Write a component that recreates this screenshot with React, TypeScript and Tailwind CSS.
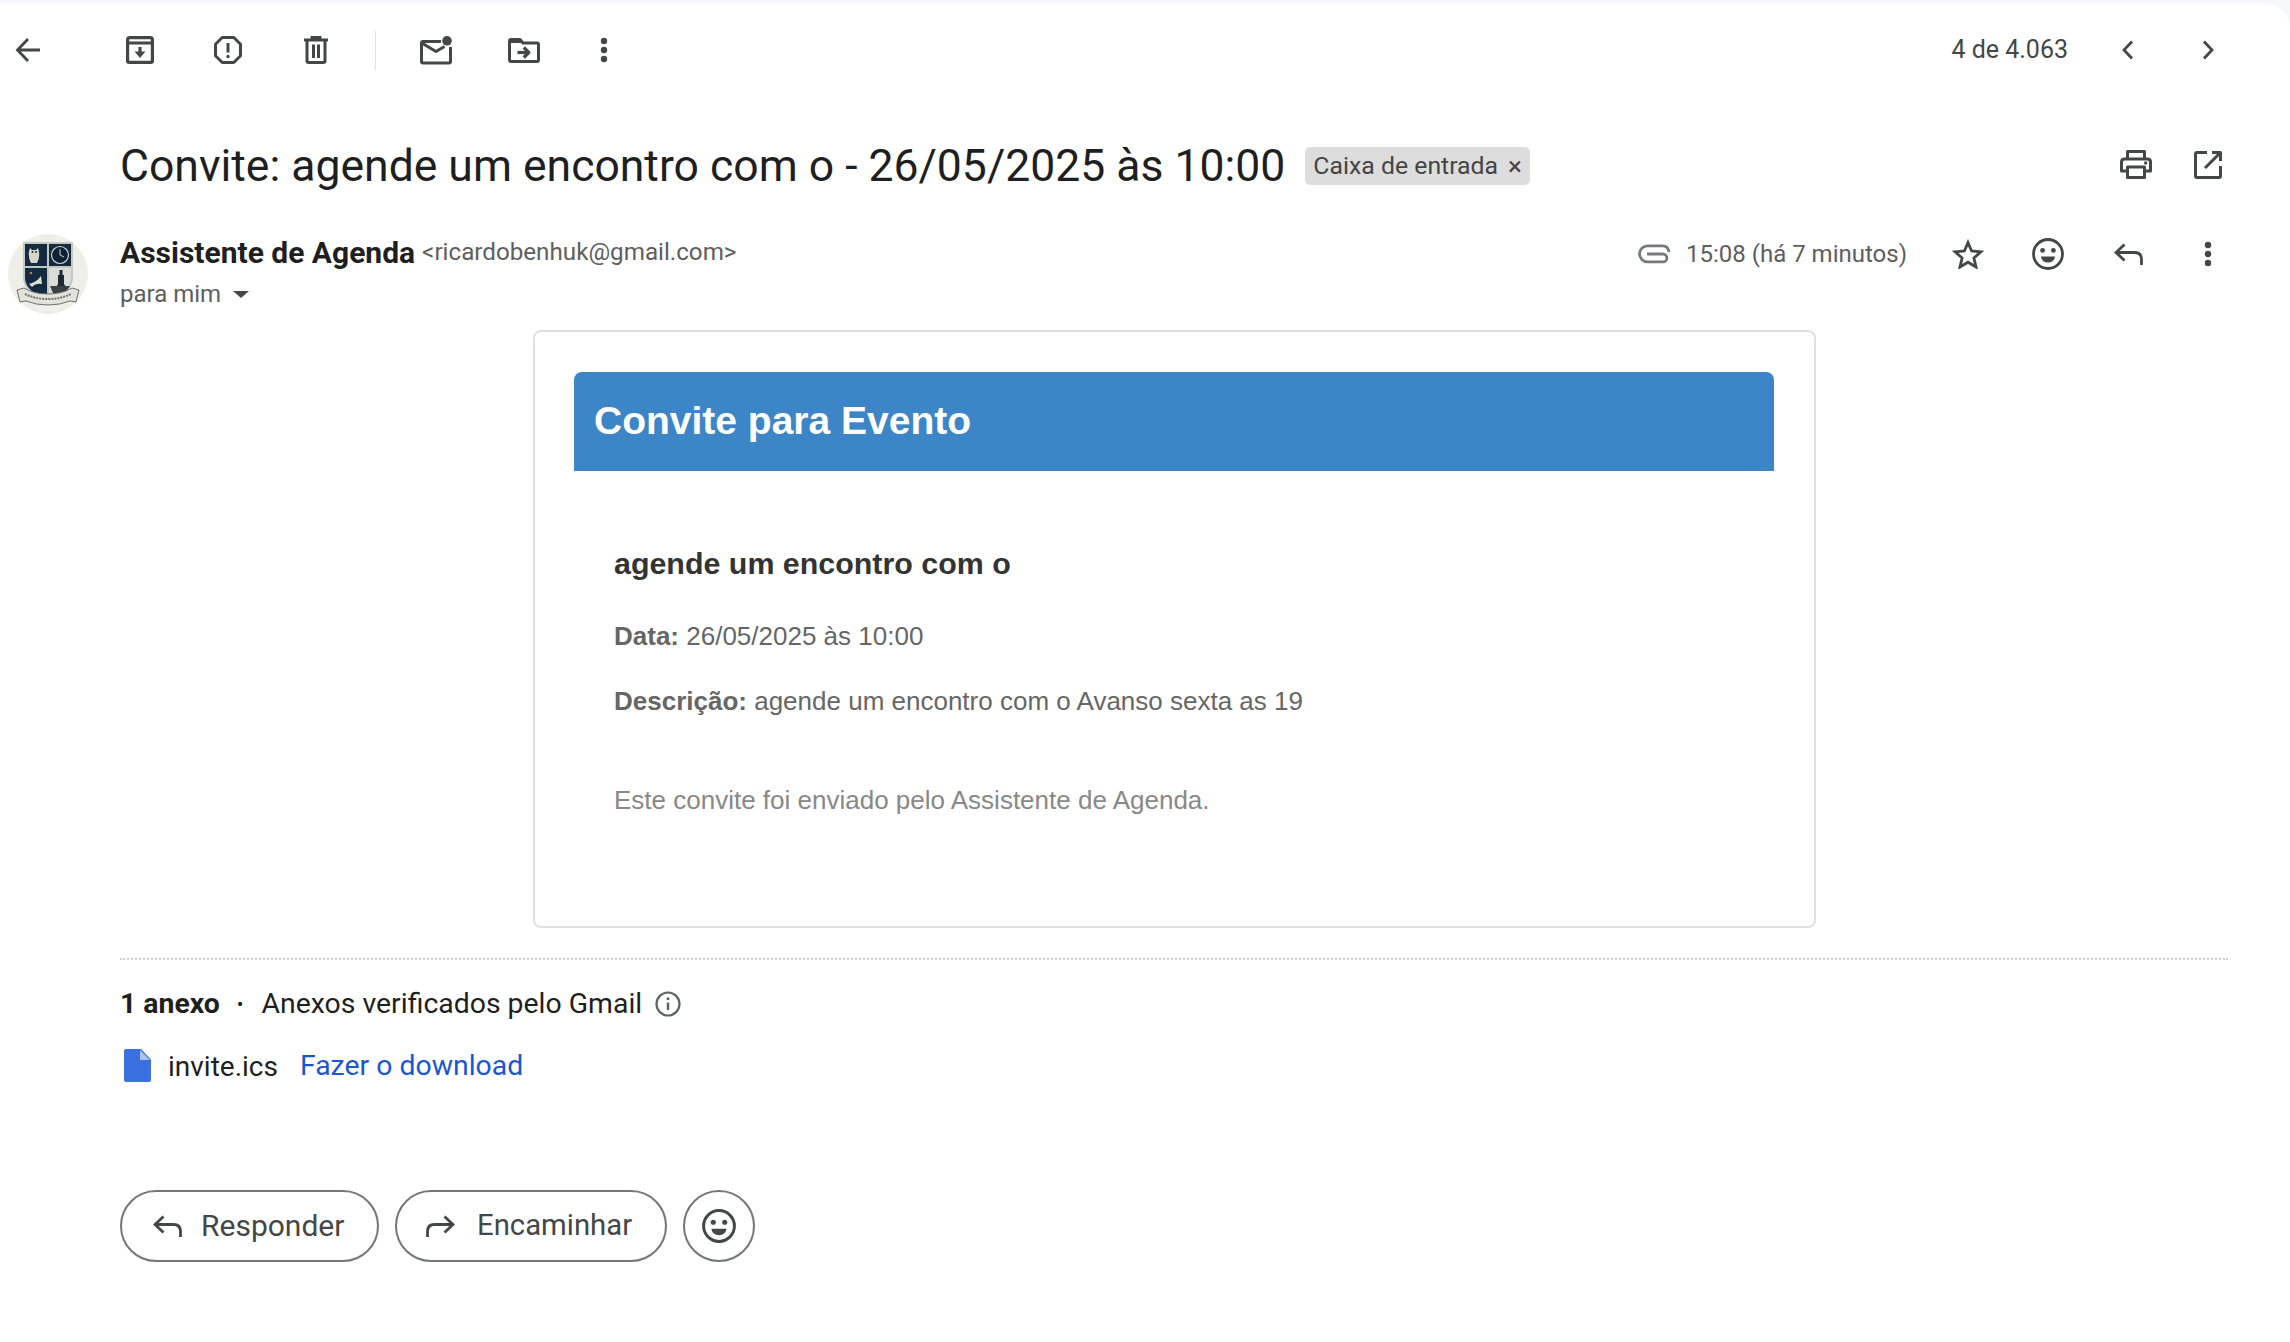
const gsans = "font-['Roboto','Liberation_Sans',sans-serif]";

function IconBox({ w, children }: { w: string; children: React.ReactNode }) {
  return <div className={`flex shrink-0 items-center justify-center ${w}`}>{children}</div>;
}

const ink = "#444746";

function Back() {
  return (
    <svg width="26" height="26" viewBox="0 0 26 26" fill="none" stroke={ink} strokeWidth="2.8">
      <path d="M25 13H3M13 2 2.5 13 13 24" />
    </svg>
  );
}
function Archive() {
  return (
    <svg width="28" height="28" viewBox="0 0 28 28" fill="none" stroke={ink} strokeWidth="3.2" strokeLinejoin="round">
      <path d="M1.6 7V3.8q0-2.2 2.2-2.2h20.4q2.2 0 2.2 2.2V7M1.6 7h24.8v17.7q0 1.7-1.7 1.7H3.3q-1.7 0-1.7-1.7z" />
      <path d="M14 11v7" />
      <path d="M8.5 15.5h11L14 22z" fill={ink} stroke="none" />
    </svg>
  );
}
function Report() {
  return (
    <svg width="28" height="28" viewBox="0 0 28 28" fill="none" stroke={ink} strokeWidth="3" strokeLinejoin="round">
      <path d="M8.2 1.5h11.6l6.7 6.7v11.6l-6.7 6.7H8.2l-6.7-6.7V8.2z" />
      <path d="M14 7v9.5" />
      <circle cx="14" cy="20.5" r="1.7" fill={ink} stroke="none" />
    </svg>
  );
}
function Trash() {
  return (
    <svg width="24" height="28" viewBox="0 0 24 28" fill="none" stroke={ink} strokeWidth="3">
      <path d="M0 4h24M8 4V1.5h8V4M3 4v21q0 1.5 1.5 1.5h15q1.5 0 1.5-1.5V4" />
      <path d="M9.5 8.5v13.5M14.5 8.5v13.5" />
    </svg>
  );
}
function MailDot() {
  return (
    <svg width="32" height="29" viewBox="0 0 32 29" fill="none" stroke={ink} strokeWidth="3" strokeLinejoin="round">
      <path d="M21 5.5H3q-1.5 0-1.5 1.5v18.5q0 1.5 1.5 1.5h26q1.5 0 1.5-1.5V11" />
      <path d="M1.8 7 16 15.5l8.5-5" />
      <circle cx="27" cy="4.8" r="4.8" fill={ink} stroke="none" />
    </svg>
  );
}
function MoveTo() {
  return (
    <svg width="32" height="25" viewBox="0 0 32 25" fill="none" stroke={ink} strokeWidth="3" strokeLinejoin="round">
      <path d="M1.5 3q0-1.5 1.5-1.5h9l3 3.4h14q1.5 0 1.5 1.5V22q0 1.5-1.5 1.5H3q-1.5 0-1.5-1.5z" />
      <path d="M1.5 1.5h10.5l3 3.4H1.5z" fill={ink} stroke="none" />
      <path d="M9.5 14.5h10.5" strokeWidth="3.2" />
      <path d="M15.8 9.5l5 5-5 5" strokeWidth="3.2" />
    </svg>
  );
}
function More() {
  return (
    <svg width="8" height="26" viewBox="0 0 8 26" fill={ink}>
      <circle cx="4" cy="4" r="3.2" />
      <circle cx="4" cy="13" r="3.2" />
      <circle cx="4" cy="22" r="3.2" />
    </svg>
  );
}
function Chevron({ dir }: { dir: "l" | "r" }) {
  return (
    <svg width="14" height="20" viewBox="0 0 14 20" fill="none" stroke={ink} strokeWidth="2.8">
      <path d={dir === "l" ? "M11 1.5 3 10l8 8.5" : "M3 1.5 11 10l-8 8.5"} />
    </svg>
  );
}
function Print() {
  return (
    <svg width="32" height="29" viewBox="0 0 32 29" fill="none" stroke={ink} strokeWidth="3" strokeLinejoin="round">
      <path d="M7.5 9V1.5h17V9" />
      <path d="M7.5 21H1.5v-9q0-3 3-3h23q3 0 3 3v9H24.5" />
      <path d="M7.5 17h17v10.5h-17z" />
      <circle cx="25.7" cy="13" r="1.7" fill={ink} stroke="none" />
    </svg>
  );
}
function OpenNew() {
  return (
    <svg width="28" height="28" viewBox="0 0 28 28" fill="none" stroke={ink} strokeWidth="3" strokeLinejoin="round">
      <path d="M13 1.5H3q-1.5 0-1.5 1.5v22q0 1.5 1.5 1.5h22q1.5 0 1.5-1.5V15" />
      <path d="M26.5 1.5 11 17M18 1.5h8.5V10" />
    </svg>
  );
}
function Clip() {
  return (
    <svg width="32" height="20" viewBox="0 0 32 20" fill="none" stroke="#777a7c" strokeWidth="2.8">
      <path d="M31 8C30.5 4 28 1.8 24 1.8H9.5a8 8 0 0 0 0 16H25a3.9 3.9 0 0 0 0-7.8H9" />
    </svg>
  );
}
function Star() {
  return (
    <svg width="32" height="30" viewBox="0 0 32 30" fill="none" stroke={ink} strokeWidth="2.8" strokeLinejoin="miter">
      <path d="M16 3.5 19.6 12l9.3.8-7 6.1 2.1 9.1-8-4.8-8 4.8 2.1-9.1-7-6.1 9.3-.8z" />
    </svg>
  );
}
function Smile({ size = 32 }: { size?: number }) {
  return (
    <svg width={size} height={size} viewBox="0 0 32 32" fill="none" stroke={ink} strokeWidth="2.8">
      <circle cx="16" cy="16" r="14.5" />
      <circle cx="10.6" cy="12.4" r="2.4" fill={ink} stroke="none" />
      <circle cx="21.4" cy="12.4" r="2.4" fill={ink} stroke="none" />
      <path d="M8.8 18.6h14.4q-1.2 6-7.2 6t-7.2-6z" fill={ink} stroke="none" />
    </svg>
  );
}
function Reply() {
  return (
    <svg width="29" height="22" viewBox="0 0 29 22" fill="none" stroke={ink} strokeWidth="2.8">
      <path d="M10.5 1.5 2 9.5l8.5 8M2 9.5h18.5q7 0 7 7V22" />
    </svg>
  );
}
function Forward() {
  return (
    <svg width="29" height="22" viewBox="0 0 29 22" fill="none" stroke={ink} strokeWidth="2.8">
      <path d="M18.5 1.5 27 9.5l-8.5 8M27 9.5H8.5q-7 0-7 7V22" />
    </svg>
  );
}
function Info() {
  return (
    <svg width="26" height="26" viewBox="0 0 26 26" fill="none" stroke="#5f6368" strokeWidth="2.2">
      <circle cx="13" cy="13" r="11.5" />
      <path d="M13 11.5v7.5" strokeWidth="2.4" />
      <circle cx="13" cy="7.8" r="1.5" fill="#5f6368" stroke="none" />
    </svg>
  );
}
function FileIcon() {
  return (
    <svg width="27" height="33" viewBox="0 0 27 33">
      <path d="M2 0h15l10 10.5V31q0 2-2 2H2q-2 0-2-2V2q0-2 2-2z" fill="#3b70e0" />
      <path d="M16 1v10h10z" fill="#a9c3f5" />
    </svg>
  );
}
function Crest() {
  return (
    <svg width="80" height="80" viewBox="0 0 80 80">
      <ellipse cx="40" cy="40" rx="40" ry="40" fill="#efefe9" />
      <path d="M15 8h50v36q0 14-25 23Q15 58 15 44z" fill="#c4c6c3" />
      <path d="M17 10h22v22H17z" fill="#132b40" />
      <path d="M41 10h22v22H41z" fill="#132b40" />
      <path d="M17 34h22v31q-22-8-22-21z" fill="#132b40" />
      <path d="M41 34h22v10q0 13-22 21z" fill="#dcdcd6" />
      <path d="M23 29q-4-8-1-15l2 2h4l2-2q3 8-1 15z" fill="#d8d6cb" />
      <circle cx="24.5" cy="18" r="1" fill="#132b40" />
      <circle cx="28" cy="18" r="1" fill="#132b40" />
      <circle cx="52" cy="21" r="8.5" fill="#0e2233" stroke="#cfd3d2" strokeWidth="1.2" />
      <path d="M52 15v6l4 2" fill="none" stroke="#cfd3d2" strokeWidth="1" />
      <path d="M21 50q8-2 12-8l1 8q-6-1-10 3z" fill="#dfdfd8" />
      <circle cx="23" cy="39" r="1.2" fill="#c08a4a" />
      <path d="M50 50v-9h1.5v-5h3v5H56v9l2 3H48z" fill="#1a2a38" />
      <path d="M42 52h20l-5 7H45z" fill="#3a3f44" />
      <path d="M9 56l7-2q10 6 24 6t24-6l7 2-3 12-6-1q-10 4-22 4t-22-4l-6 1z" fill="#e3e3dc" stroke="#6b6f70" strokeWidth="1" />
      <path d="M17 60q10 5 23 5t23-5" fill="none" stroke="#6f7372" strokeWidth="2" strokeDasharray="2 1" />
    </svg>
  );
}

export default function App() {
  return (
    <div className="h-[1342px] w-[2290px] overflow-hidden bg-[#f6f8fc] pt-[3px] font-['Roboto',sans-serif]">
      <div className="h-full rounded-tr-[26px] bg-white">
        <div className="flex h-[94px] items-center pr-[42px]">
          <IconBox w="w-[56px]"><Back /></IconBox>
          <div className="w-[40px]" />
          <IconBox w="w-[88px]"><Archive /></IconBox>
          <IconBox w="w-[88px]"><Report /></IconBox>
          <IconBox w="w-[88px]"><Trash /></IconBox>
          <div className="ml-[15px] mr-[16px] h-[39px] w-px bg-[#e3e3e3]" />
          <IconBox w="w-[88px]"><MailDot /></IconBox>
          <IconBox w="w-[88px]"><MoveTo /></IconBox>
          <IconBox w="w-[72px]"><More /></IconBox>
          <div className="ml-auto mr-[20px] text-[25px] text-[#444746]">4 de 4.063</div>
          <IconBox w="w-[80px]"><Chevron dir="l" /></IconBox>
          <IconBox w="w-[80px]"><Chevron dir="r" /></IconBox>
        </div>
        <div className="flex h-[135px] items-center pl-[120px] pr-[50px]">
          <h1 className={`${gsans} mt-[3px] text-[44.5px] leading-none font-normal text-[#1f1f1f]`}>Convite: agende um encontro com o - 26/05/2025 às 10:00</h1>
          <div className="ml-[20px] mt-[2px] flex h-[38px] items-center rounded-[5px] bg-[#dddddd] pl-[8px] pr-[8px] text-[24.8px] text-[#444444]">
            Caixa de entrada
            <span className="ml-[10px] text-[26px] leading-none">×</span>
          </div>
          <div className="ml-auto" />
          <IconBox w="w-[80px]"><Print /></IconBox>
          <IconBox w="w-[64px]"><OpenNew /></IconBox>
        </div>
        <div className="flex h-[98px] pl-[8px] pr-[63px]">
          <div className="shrink-0 pt-[2px]"><Crest /></div>
          <div className="ml-[32px]">
            <div className="mt-[5px] flex h-[30px] items-center">
              <span className={`${gsans} text-[30px] font-bold text-[#1f1f1f]`}>Assistente de Agenda</span>
              <span className="ml-[7px] text-[24.2px] text-[#5e5e5e]">&lt;ricardobenhuk@gmail.com&gt;</span>
            </div>
            <div className="mt-[12px] flex h-[30px] items-center text-[24px] text-[#5e5e5e]">
              para mim
              <span className="ml-[12px] h-0 w-0 border-x-[8px] border-t-[7px] border-x-transparent border-t-[#444746]" />
            </div>
          </div>
          <div className="ml-auto flex h-[44px] items-center">
            <Clip />
            <span className="ml-[16px] text-[24px] text-[#5e5e5e]">15:08 (há 7 minutos)</span>
            <IconBox w="w-[122px]"><Star /></IconBox>
            <IconBox w="w-[38px]"><Smile /></IconBox>
            <IconBox w="w-[122px]"><Reply /></IconBox>
            <IconBox w="w-[38px]"><More /></IconBox>
          </div>
        </div>
        <div className="pl-[533px]">
          <div className="h-[598px] w-[1283px] rounded-[8px] border-2 border-[#e0e0e0] pb-[40px] pl-[39px] pr-[40px] pt-[40px] font-['Liberation_Sans',sans-serif]">
            <div className="flex h-[99px] items-center rounded-t-[8px] bg-[#3c85c6] pl-[20px] text-[39px] font-bold text-white">Convite para Evento</div>
            <div className="px-[40px]">
              <h2 className="mt-[75px] text-[30.4px] leading-[34px] font-bold text-[#333333]">agende um encontro com o</h2>
              <p className="mt-[41px] text-[26px] leading-[30px] text-[#666666]"><b>Data:</b> 26/05/2025 às 10:00</p>
              <p className="mt-[35px] text-[26px] leading-[30px] text-[#666666]"><b>Descrição:</b> agende um encontro com o Avanso sexta as 19</p>
              <p className="mt-[69px] text-[26px] leading-[30px] text-[#888888]">Este convite foi enviado pelo Assistente de Agenda.</p>
            </div>
          </div>
        </div>
        <div className="ml-[120px] mr-[62px] mt-[30px] border-t-2 border-dotted border-[#d0d0d0]" />
        <div className="ml-[120px] mt-[29px] flex h-[30px] items-center text-[28.4px] text-[#1f1f1f]">
          <b>1 anexo</b>
          <span className="ml-[17px] text-[20px]">•</span>
          <span className="ml-[18px]">Anexos verificados pelo Gmail</span>
          <span className="ml-[13px] flex"><Info /></span>
        </div>
        <div className="ml-[124px] mt-[30px] flex h-[33px] items-center">
          <FileIcon />
          <span className="ml-[17px] mt-[2px] text-[28px] text-[#1f1f1f]">invite.ics</span>
          <span className="ml-[22px] mt-[2px] text-[28.4px] text-[#1a56d0]">Fazer o download</span>
        </div>
        <div className={`${gsans} ml-[120px] mt-[108px] flex gap-[16px] text-[#444746]`}>
          <div className="flex h-[72px] w-[259px] items-center rounded-full border-2 border-[#747775] pl-[31px]">
            <Reply />
            <span className="-mt-[2px] ml-[19px] text-[30px]">Responder</span>
          </div>
          <div className="flex h-[72px] w-[272px] items-center rounded-full border-2 border-[#747775] pl-[29px]">
            <Forward />
            <span className="ml-[22px] text-[29.3px]">Encaminhar</span>
          </div>
          <div className="flex h-[72px] w-[72px] items-center justify-center rounded-full border-2 border-[#747775]">
            <Smile size={34} />
          </div>
        </div>
      </div>
    </div>
  );
}
